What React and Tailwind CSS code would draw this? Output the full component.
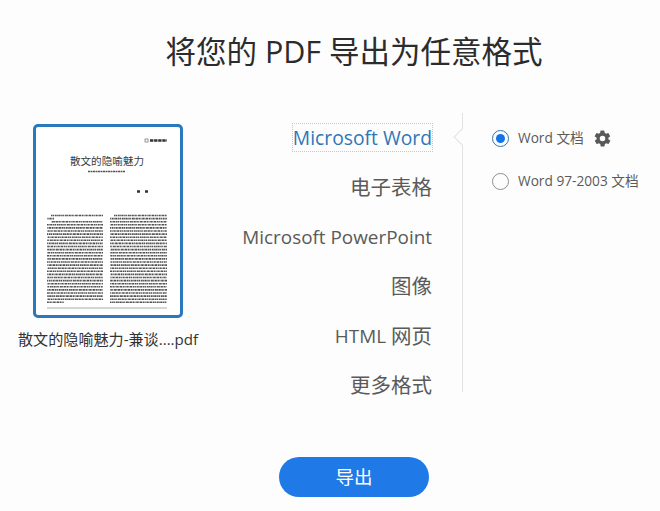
const SANS = { fontFamily: '"Open Sans","Noto Sans CJK SC",sans-serif' };

function Thumb() {
  const colA = [];
  const colB = [];
  for (let i = 0; i < 29; i++) {
    const y = 88.5 + i * 3.1;
    colA.push(<line key={i} strokeDashoffset={i * 1.37} x1={i === 0 || i === 2 ? 15 : 11} x2={i === 1 ? 18 : i === 28 ? 28 : 67} y1={y} y2={y} />);
    colB.push(<line key={i} strokeDashoffset={i * 2.11} x1={i === 0 ? 78 : 74} x2="131" y1={y} y2={y} />);
  }
  return (
    <div className="w-[150px] h-[194px] rounded-[5px] border-[3px] border-[#2a79bd] bg-white relative overflow-hidden">
      <svg className="absolute inset-0" width="144" height="188" viewBox="0 0 144 188">
        <g stroke="#333" strokeWidth="1.6" strokeDasharray="1.5 0.4 1.1 0.7 1.9 0.3 0.9 0.5 2.3 0.6" opacity="0.85">
          {colA}
          {colB}
        </g>
        <line x1="11" x2="131" y1="181" y2="181" stroke="#9fb0b8" strokeWidth="1.2" />
        <rect x="109" y="12" width="3" height="3" fill="none" stroke="#555" strokeWidth="0.6" />
        <line x1="114" x2="131" y1="13.5" y2="13.5" stroke="#333" strokeWidth="2.6" strokeDasharray="3.4 0.7" />
        <line x1="52" x2="89" y1="44.5" y2="44.5" stroke="#555" strokeWidth="1.7" strokeDasharray="2 0.5" />
        <line x1="101" x2="112" y1="64.5" y2="64.5" stroke="#333" strokeWidth="2.6" strokeDasharray="3 5" />
      </svg>
      <div
        className="absolute left-0 right-[2px] top-[25px] text-center text-[10.6px] leading-[18px] text-[#3c3c3c]"
        style={{ fontFamily: '"Noto Sans CJK SC",serif' }}
      >
        散文的隐喻魅力
      </div>
    </div>
  );
}

function Row({ children, className = "" }) {
  return <div className={`h-[29px] flex items-center justify-end whitespace-nowrap ${className}`}>{children}</div>;
}

function Gear() {
  return (
    <svg width="19" height="19" viewBox="0 0 24 24" fill="#595959">
      <path
        fillRule="evenodd"
        d="M19.4 13a7.5 7.5 0 0 0 0-2l2.1-1.6a.5.5 0 0 0 .1-.6l-2-3.5a.5.5 0 0 0-.6-.2l-2.5 1a7.5 7.5 0 0 0-1.7-1l-.4-2.7a.5.5 0 0 0-.5-.4h-4a.5.5 0 0 0-.5.4l-.4 2.7a7.5 7.5 0 0 0-1.7 1l-2.5-1a.5.5 0 0 0-.6.2l-2 3.5a.5.5 0 0 0 .1.6L4.6 11a7.5 7.5 0 0 0 0 2l-2.1 1.6a.5.5 0 0 0-.1.6l2 3.5c.1.2.4.3.6.2l2.5-1c.5.4 1.1.7 1.7 1l.4 2.7c0 .2.2.4.5.4h4c.3 0 .5-.2.5-.4l.4-2.7c.6-.3 1.2-.6 1.7-1l2.5 1c.2.1.5 0 .6-.2l2-3.5a.5.5 0 0 0-.1-.6zM12 15.5a3.5 3.5 0 1 1 0-7 3.5 3.5 0 0 1 0 7z"
      />
    </svg>
  );
}

export default function App() {
  return (
    <div className="w-[660px] h-[511px] bg-[#fdfdfd] overflow-hidden flex flex-col items-stretch text-[#4b4b4b]" style={SANS}>
      <h1 className="mt-[29px] pl-[48px] text-center text-[30.5px] leading-[44px] font-normal text-[#2c2c2c]">
        将您的 PDF 导出为任意格式
      </h1>

      <div className="mt-[40px] h-[279px] flex">
        <div className="w-[216px] pl-[33px] pt-[11px] flex flex-col">
          <Thumb />
          <div className="-ml-[15px] mt-[9px] text-[15.1px] leading-[24px] whitespace-nowrap text-[#333]">
            散文的隐喻魅力-兼谈....pdf
          </div>
        </div>

        <div className="w-[247px] border-r border-[#e2e2e2] relative">
          <div className="flex flex-col items-end pr-[30px] pt-[10px] gap-[20.6px] text-[18.9px] text-[#5a5a5a]">
            <Row>
              <span className="text-[19.3px] text-[#2f76b8] outline-1 outline-dotted outline-[#c4c9d0] leading-[27px] block">Microsoft Word</span>
            </Row>
            <Row className="text-[20.5px]">电子表格</Row>
            <Row>Microsoft PowerPoint</Row>
            <Row className="text-[20.5px]">图像</Row>
            <Row>HTML <span className="ml-[5px] text-[20.5px]">网页</span></Row>
            <Row className="text-[20.5px]">更多格式</Row>
          </div>
          <div className="absolute right-[-6px] top-[18px] w-[12px] h-[12px] rotate-45 bg-[#fdfdfd] border-l border-b border-[#e2e2e2]" />
        </div>

        <div className="pl-[29px] pt-[15px] flex flex-col gap-[23px] text-[13.7px] leading-[20px] text-[#5a5a5a]">
          <div className="flex items-center gap-[9px] h-[20px]">
            <span className="w-[17px] h-[17px] rounded-full border border-[#2a79bd] flex items-center justify-center">
              <span className="w-[9px] h-[9px] rounded-full bg-[#1473e6]" />
            </span>
            <span>Word 文档</span>
            <span className="-ml-[0px]"><Gear /></span>
          </div>
          <div className="flex items-center gap-[9px] h-[20px]">
            <span className="w-[17px] h-[17px] rounded-full border border-[#8f8f8f]" />
            <span className="whitespace-nowrap">Word 97-2003 文档</span>
          </div>
        </div>
      </div>

      <div className="mt-[65px] flex justify-center pl-[48px]">
        <button className="w-[150px] h-[40px] rounded-full bg-[#1f7ae8] text-white text-[18.5px] font-normal">
          导出
        </button>
      </div>
    </div>
  );
}
